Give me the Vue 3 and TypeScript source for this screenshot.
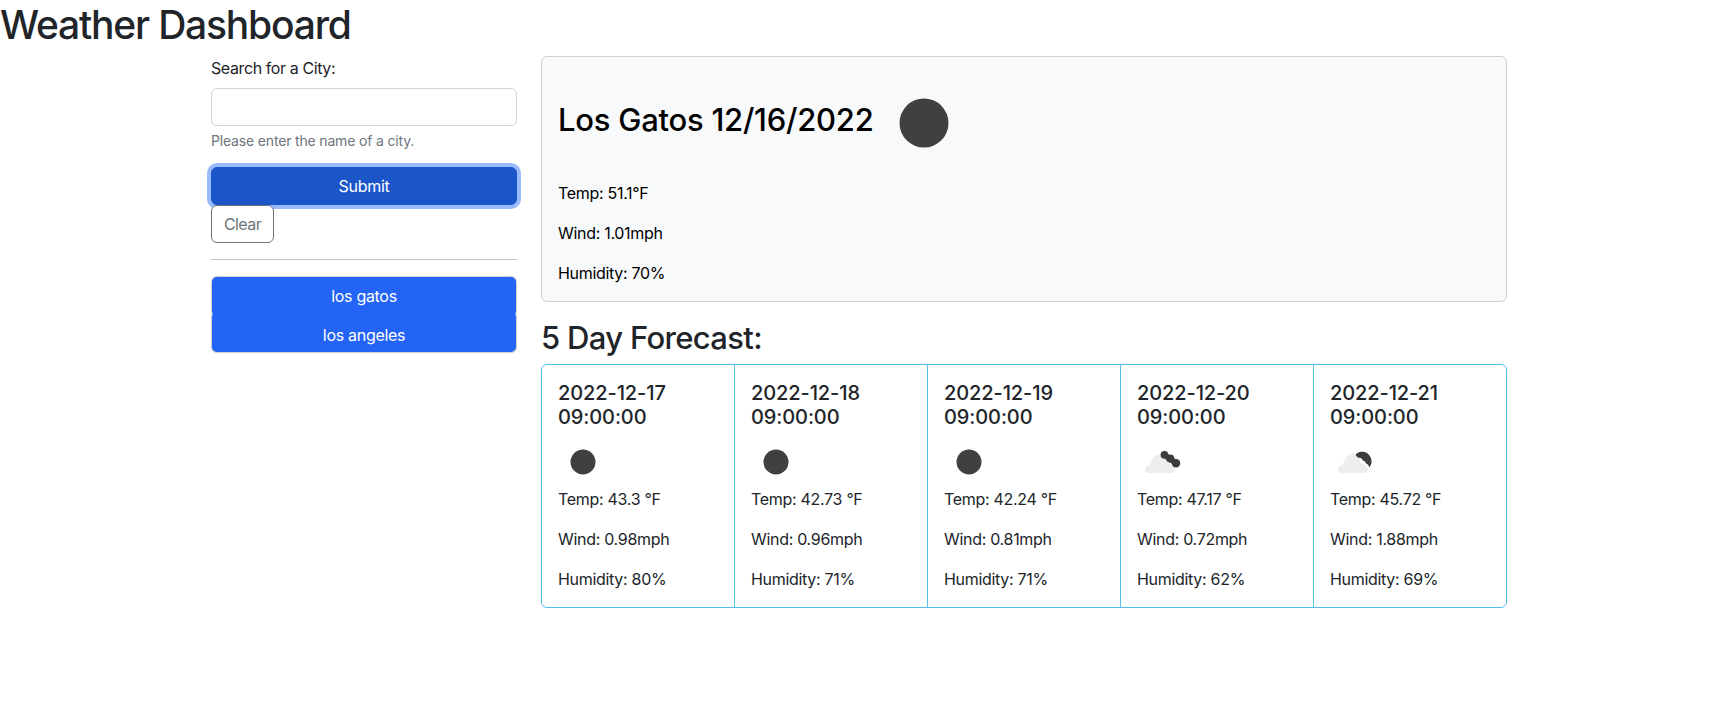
<script setup lang="ts">
import { ref } from 'vue'

type Sky = 'clear' | 'broken' | 'scattered'

interface Day {
  date: string
  sky: Sky
  temp: string
  wind: string
  humidity: string
}

const city = ref('')
const history = ['los gatos', 'los angeles']

const days: Day[] = [
  { date: '2022-12-17 09:00:00', sky: 'clear', temp: '43.3', wind: '0.98', humidity: '80' },
  { date: '2022-12-18 09:00:00', sky: 'clear', temp: '42.73', wind: '0.96', humidity: '71' },
  { date: '2022-12-19 09:00:00', sky: 'clear', temp: '42.24', wind: '0.81', humidity: '71' },
  { date: '2022-12-20 09:00:00', sky: 'broken', temp: '47.17', wind: '0.72', humidity: '62' },
  { date: '2022-12-21 09:00:00', sky: 'scattered', temp: '45.72', wind: '1.88', humidity: '69' }
]
</script>

<template>
  <div class="page">
    <h1 class="page-title">Weather Dashboard</h1>

    <div class="layout">
      <aside class="sidebar">
        <form class="search" @submit.prevent>
          <label class="field-label" for="city">Search for a City:</label>
          <input id="city" v-model="city" class="field-input" type="text" />
          <div class="field-help">Please enter the name of a city.</div>
          <button class="btn-submit" type="submit">Submit</button>
          <button class="btn-clear" type="button" @click="city = ''">Clear</button>
        </form>

        <hr class="divider" />

        <div class="history">
          <button v-for="name in history" :key="name" class="btn-history" type="button">
            {{ name }}
          </button>
        </div>
      </aside>

      <main class="content">
        <section class="today">
          <div class="today-head">
            <h2 class="today-title">Los Gatos 12/16/2022</h2>
            <svg class="today-icon" viewBox="0 0 100 100">
              <circle cx="50" cy="50" r="24.5" fill="#404040" />
            </svg>
          </div>
          <p>Temp: 51.1°F</p>
          <p>Wind: 1.01mph</p>
          <p class="last">Humidity: 70%</p>
        </section>

        <h3 class="forecast-title">5 Day Forecast:</h3>

        <div class="forecast">
          <article v-for="day in days" :key="day.date" class="day">
            <h5 class="day-date">{{ day.date }}</h5>
            <svg class="day-icon" viewBox="0 0 50 50">
              <circle v-if="day.sky === 'clear'" cx="25" cy="25" r="12.5" fill="#404040" />
              <template v-else>
                <path
                  fill="#eeeeee"
                  d="M11.5 36C8.5 36 7.5 33 8 31.5C8.6 29 11 28 13.5 27.5C14 22 18 17.5 22.5 16.8C27 16.5 29.5 20.5 30.5 25.5C34 26.5 38 28.5 38 32C38 34.5 36.5 36 34 36Z"
                />
                <g v-if="day.sky === 'broken'" fill="#3c3c3c">
                  <circle cx="27.5" cy="17.8" r="3.9" />
                  <circle cx="33.2" cy="21.6" r="4.1" />
                  <circle cx="39" cy="26.2" r="4.2" />
                  <path d="M28.7 15.4L40.6 23.8L37.4 28.6L25.9 20.2Z" />
                </g>
                <path
                  v-else
                  fill="#3c3c3c"
                  d="M25.8 18.5C26 15.5 30 14.5 33 14.8C38 15.2 42 20 41.5 25C41.3 27.2 40.5 29 39.2 30.5C38.8 28 37.5 26.8 36 26.5C35.6 24.5 33.8 23.8 32.5 23.3C32 21.2 30 20.6 28.5 20.8C27.5 20.3 26.5 19.6 25.8 18.5Z"
                />
              </template>
            </svg>
            <p>Temp: {{ day.temp }} °F</p>
            <p>Wind: {{ day.wind }}mph</p>
            <p>Humidity: {{ day.humidity }}%</p>
          </article>
        </div>
      </main>
    </div>
  </div>
</template>

<style>
body {
  margin: 0;
  background: #fff;
}
</style>

<style scoped>
.page {
  font-family: Inter, "Liberation Sans", sans-serif;
  font-size: 16px;
  line-height: 24px;
  color: #212529;
}

.page-title {
  margin: 0;
  font-size: 39px;
  line-height: 50px;
  font-weight: 500;
  letter-spacing: -1.2px;
}

.layout {
  display: grid;
  grid-template-columns: 306px 966px;
  gap: 24px;
  margin: 6px 0 0 211px;
}

.field-label {
  display: block;
  margin-bottom: 8px;
  letter-spacing: -0.4px;
}

.field-input {
  display: block;
  box-sizing: border-box;
  width: 100%;
  height: 38px;
  padding: 6px 12px;
  border: 1px solid #ced4da;
  border-radius: 6px;
  background: #fff;
  font: inherit;
  outline: none;
}

.field-help {
  margin-top: 4px;
  margin-bottom: 16px;
  font-size: 14px;
  line-height: 21px;
  color: #6c757d;
  letter-spacing: -0.17px;
}

.btn-submit,
.btn-clear,
.btn-history {
  box-sizing: border-box;
  height: 38px;
  padding: 6px 12px;
  border-radius: 6px;
  font: inherit;
  letter-spacing: -0.3px;
  cursor: pointer;
}

.btn-submit {
  display: block;
  width: 100%;
  border: 1px solid #1c55c8;
  background: #1c55c8;
  color: #fff;
  box-shadow: 0 0 0 4px #98bbfb;
}

.btn-clear {
  display: block;
  border: 1px solid #6c757d;
  background: #fff;
  color: #6c757d;
  letter-spacing: -0.6px;
  position: relative;
}

.divider {
  height: 1px;
  margin: 16px 0;
  border: 0;
  background: #c6c7c8;
}

.history {
  display: flex;
  flex-direction: column;
  margin-top: 1px;
}

.btn-history {
  width: 100%;
  padding: 7px 12px 5px;
  border: 1px solid #d0d0d0;
  background: #2364f6;
  color: #fff;
}

.btn-history:first-child {
  border-bottom-color: #2364f6;
  border-bottom-left-radius: 3px;
  border-bottom-right-radius: 3px;
}

.btn-history:last-child {
  height: 39px;
  border-top-color: #2364f6;
  border-top-left-radius: 3px;
  border-top-right-radius: 3px;
}

.today {
  box-sizing: border-box;
  height: 246px;
  padding: 16px;
  border: 1px solid #cfd0d1;
  border-radius: 6px;
  background: #f8f9fa;
  color: #000;
}

.today-head {
  display: flex;
  align-items: center;
  height: 100px;
  margin-bottom: 8px;
}

.today-title {
  margin: 0 0 6px;
  font-size: 31px;
  line-height: 38px;
  font-weight: 500;
  letter-spacing: -0.25px;
}

.today-icon {
  width: 100px;
  height: 100px;
  flex: none;
}

p {
  margin: 0 0 16px;
  letter-spacing: -0.3px;
}

p.last {
  margin-bottom: 0;
}

.forecast-title {
  margin: 19px 0 9px;
  font-size: 31px;
  line-height: 34px;
  font-weight: 500;
  letter-spacing: -0.67px;
}

.forecast {
  display: grid;
  grid-template-columns: 192px repeat(4, 193px);
  border: 1px solid #55bfe9;
  border-radius: 6px;
}

.day {
  padding: 16px 16px 0;
  border-left: 1px solid #55bfe9;
}

.day:first-child {
  border-left: 0;
}

.day-date {
  margin: 0 0 8px;
  font-size: 20px;
  line-height: 24px;
  font-weight: 500;
  letter-spacing: -0.1px;
}

.day-icon {
  display: block;
  width: 50px;
  height: 50px;
}
</style>
